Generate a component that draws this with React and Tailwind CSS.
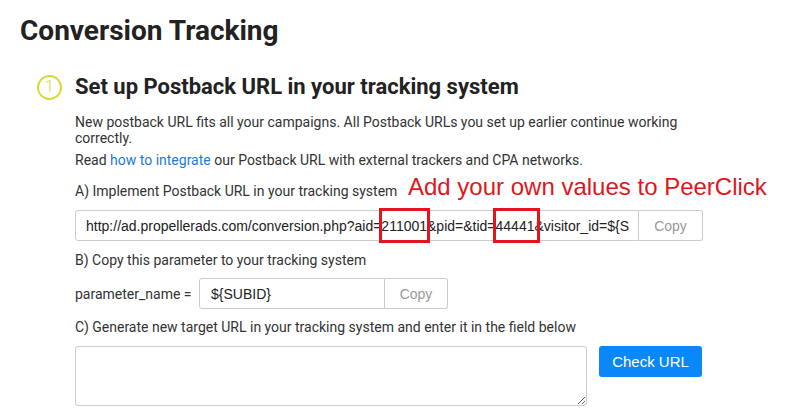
const roboto = { fontFamily: 'Roboto, "Liberation Sans", sans-serif' };
const arial = { fontFamily: '"Liberation Sans", Arial, sans-serif' };

export default function App() {
    return (
        <div
            className="min-h-screen bg-white pl-[20px] pt-[15px] text-[#333]"
            style={roboto}
        >
            <h1 className="text-[28px] font-bold leading-[32px] text-[#222]">
                Conversion Tracking
            </h1>

            {/* Step 1 */}
            <div className="mt-[26px] flex items-center">
                <div className="ml-[17px] flex h-[25px] w-[25px] items-center justify-center rounded-full border-2 border-[#d5dc3a]">
                    <span className="text-[16px] font-light leading-none text-[#d5dc3a]">
                        1
                    </span>
                </div>
                <h2 className="ml-[13px] text-[22px] font-bold leading-[28px] text-[#222]">
                    Set up Postback URL in your tracking system
                </h2>
            </div>

            <div className="ml-[55px] mt-[13px] w-[628px] text-[14px] leading-[16px]">
                <p className="pr-[20px]">
                    New postback URL fits all your campaigns. All Postback URLs
                    you set up earlier continue working correctly.
                </p>
                <p className="mt-[6px]">
                    Read{' '}
                    <a href="#" className="text-[#1a7be0]">
                        how to integrate
                    </a>{' '}
                    our Postback URL with external trackers and CPA networks.
                </p>

                {/* A */}
                <div className="relative mt-[15px]">
                    <p>A) Implement Postback URL in your tracking system</p>
                    <span
                        className="absolute left-[333px] top-[-10px] whitespace-nowrap text-[24px] leading-[28px] text-[#e3141c]"
                        style={arial}
                    >
                        Add your own values to PeerClick
                    </span>
                </div>
                <div className="relative mt-[11px] flex h-[31px]" style={arial}>
                    <div className="flex flex-1 items-center overflow-hidden whitespace-nowrap rounded-l-[3px] border border-[#ccc] pl-[10px] text-[14px] text-[#222]">
                        http://ad.propellerads.com/conversion.php?aid=211001&amp;pid=&amp;tid=44441&amp;visitor_id=${'{'}S
                    </div>
                    <button className="w-[64px] shrink-0 rounded-r-[3px] border border-l-0 border-[#ccc] text-[14px] text-[#999]">
                        Copy
                    </button>
                    <div className="absolute left-[304px] top-[-2px] h-[35px] w-[51px] border-[3px] border-[#e3141c]" />
                    <div className="absolute left-[418px] top-[-2px] h-[35px] w-[47px] border-[3px] border-[#e3141c]" />
                </div>

                {/* B */}
                <p className="mt-[11px]">
                    B) Copy this parameter to your tracking system
                </p>
                <div className="mt-[10px] flex items-center">
                    <span className="w-[124px]">parameter_name =</span>
                    <div className="flex h-[31px]" style={arial}>
                        <div className="flex w-[186px] items-center rounded-l-[3px] border border-[#ccc] pl-[11px] text-[14px] text-[#222]">
                            ${'{'}SUBID{'}'}
                        </div>
                        <button className="w-[63px] rounded-r-[3px] border border-l-0 border-[#ccc] text-[14px] text-[#999]">
                            Copy
                        </button>
                    </div>
                </div>

                {/* C */}
                <p className="mt-[10px]">
                    C) Generate new target URL in your tracking system and enter
                    it in the field below
                </p>
                <div className="mt-[11px] flex items-start">
                    <textarea className="h-[60px] w-[512px] rounded-[3px] border border-[#ccc]" />
                    <button
                        className="ml-[12px] h-[31px] w-[103px] rounded-[3px] bg-[#0a88fa] text-[15px] text-white"
                        style={arial}
                    >
                        Check URL
                    </button>
                </div>
            </div>
        </div>
    );
}
